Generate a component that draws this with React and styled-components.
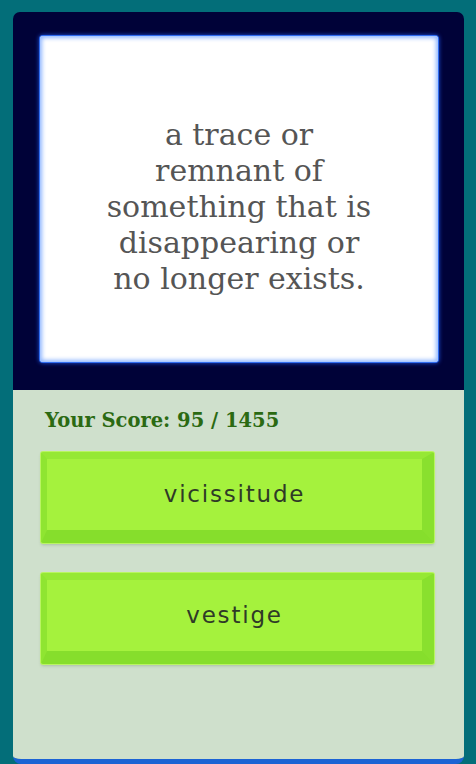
import styled, { createGlobalStyle } from "styled-components";

const GlobalStyle = createGlobalStyle`
  html, body {
    margin: 0;
    padding: 0;
    background: #036e79;
  }
`;

const Screen = styled.div`
  min-height: 764px;
  padding: 12px 12px 0 13px;
  box-sizing: border-box;
`;

const Frame = styled.div`
  display: flex;
  flex-direction: column;
  border-radius: 7px 7px 8px 8px;
  overflow: hidden;
  border-bottom: 5px solid #1b63d4;
`;

const Stage = styled.div`
  background: #000238;
  padding: 24px 26px 28px 27px;
`;

const Card = styled.div`
  height: 326px;
  display: flex;
  align-items: center;
  justify-content: center;
  background: #ffffff;
  border-radius: 3px;
  box-shadow: 0 0 0 1px #2f6cf0, inset 0 0 4px 2px #8fb6ff, 0 0 4px 1px #1d4fd8;
  padding: 16px 30px 0;
  box-sizing: border-box;
`;

const Definition = styled.p`
  margin: 0;
  max-width: 274px;
  text-align: center;
  font-family: "DejaVu Serif", "Liberation Serif", serif;
  font-size: 30px;
  line-height: 36px;
  color: #555555;
`;

const Board = styled.div`
  background: #cfe0cc;
  height: 369px;
  padding: 19px 28px 0 28px;
  box-sizing: border-box;
`;

const Score = styled.h2`
  margin: 0 0 18px 4px;
  font-family: "DejaVu Serif", "Liberation Serif", serif;
  font-weight: bold;
  font-size: 19.5px;
  color: #2b6a12;
`;

const Choices = styled.div`
  display: flex;
  flex-direction: column;
  gap: 28px;
`;

const Choice = styled.button`
  display: flex;
  align-items: center;
  justify-content: center;
  width: 393px;
  height: 91px;
  margin: 2px 0 0;
  padding: 0 0 2px;
  box-sizing: border-box;
  background: #a5f23d;
  border-style: solid;
  border-width: 7px 12px 13px 6px;
  border-color: #96e835 #89e02e #86de2c #8fe531;
  border-radius: 2px;
  box-shadow: 0 0 0 1px #b9f562, 0 2px 3px rgba(60, 90, 50, 0.25);
  font-family: "DejaVu Sans", sans-serif;
  font-size: 23px;
  letter-spacing: 1.8px;
  color: #2f3a27;
  cursor: pointer;
`;

const words = ["vicissitude", "vestige"];

function App() {
  return (
    <Screen>
      <GlobalStyle />
      <Frame>
        <Stage>
          <Card>
            <Definition>
              a trace or remnant of something that is disappearing or no longer
              exists.
            </Definition>
          </Card>
        </Stage>
        <Board>
          <Score>Your Score: 95 / 1455</Score>
          <Choices>
            {words.map((w) => (
              <Choice key={w}>{w}</Choice>
            ))}
          </Choices>
        </Board>
      </Frame>
    </Screen>
  );
}

export default App;
